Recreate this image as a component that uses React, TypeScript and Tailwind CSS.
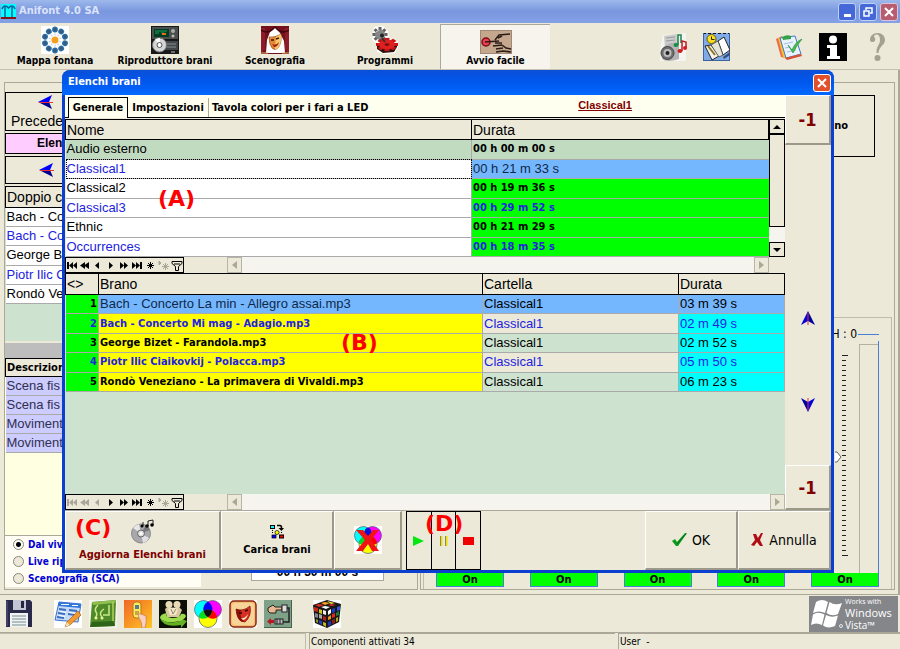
import { useState } from 'react';
import type { ReactNode } from 'react';
import clsx from 'clsx';

const TAHOMA = "font-['DejaVu_Sans_Condensed','DejaVu_Sans',sans-serif]";
const ARIAL = "font-['Liberation_Sans',Arial,sans-serif]";

const playlists = [
  { name: 'Audio esterno', duration: '00 h 00 m 00 s' },
  { name: 'Classical1', duration: '00 h 21 m 33 s' },
  { name: 'Classical2', duration: '00 h 19 m 36 s' },
  { name: 'Classical3', duration: '00 h 29 m 52 s' },
  { name: 'Ethnic', duration: '00 h 21 m 29 s' },
  { name: 'Occurrences', duration: '00 h 18 m 35 s' },
];

const tracks = [
  { title: 'Bach - Concerto La min - Allegro assai.mp3', folder: 'Classical1', duration: '03 m 39 s' },
  { title: 'Bach - Concerto Mi mag - Adagio.mp3', folder: 'Classical1', duration: '02 m 49 s' },
  { title: 'George Bizet - Farandola.mp3', folder: 'Classical1', duration: '02 m 52 s' },
  { title: 'Piotr Ilic Ciaikovkij - Polacca.mp3', folder: 'Classical1', duration: '05 m 50 s' },
  { title: 'Rondò Veneziano - La primavera di Vivaldi.mp3', folder: 'Classical1', duration: '06 m 23 s' },
];

const queue = ['Bach - Co', 'Bach - Co', 'George B', 'Piotr Ilic C', 'Rondò Ve'];
const scenes = ['Scena fis', 'Scena fis', 'Moviment', 'Moviment'];
const modes = ['Dal vivo', 'Live rip', 'Scenografia (SCA)'];

/* ---------- icone ---------- */

function LogoIcon() {
  return (
    <svg width="15" height="15" viewBox="0 0 15 15">
      <rect width="15" height="15" fill="#0ff" />
      <path d="M1 5Q2 2 4 2Q6 2 7.500 4Q9 2 11 2Q13 2 14 5M4 3v10M11 3v10" fill="none" stroke="#1060a0" strokeWidth="1.500" />
      <rect y="13" width="15" height="2" fill="#801818" />
    </svg>
  );
}

function FountainIcon() {
  const dots = [0, 36, 72, 108, 144, 180, 216, 252, 288, 324];
  return (
    <svg width="28" height="28" viewBox="0 0 28 28">
      <rect width="28" height="28" fill="#fff" />
      {dots.map((a) => (
        <g key={a} transform={`rotate(${a} 14 14)`}>
          <circle cx="14" cy="3.500" r="2.900" fill="#2a70a8" />
          <circle cx="14" cy="3.500" r="1.600" fill="#3b5878" />
          <path d="M14 7.500v2" stroke="#b8cfe6" />
        </g>
      ))}
      <circle cx="14" cy="14" r="3.500" fill="#f5a020" />
    </svg>
  );
}

function PlayerIcon() {
  return (
    <svg width="28" height="28" viewBox="0 0 28 28">
      <rect width="28" height="28" fill="#181818" />
      <rect x="1" y="1" width="26" height="12" fill="#4a4e4c" />
      <rect x="3" y="3" width="15" height="8" fill="#033b20" />
      <path d="M4 5h12M4 7h4M10 7h3" stroke="#16a35a" />
      <path d="M11 8h4" stroke="#e07020" strokeWidth="2" />
      <circle cx="22" cy="5" r="2" fill="#aaa" />
      <circle cx="22" cy="10" r="1.500" fill="#bbb" />
      <rect x="13" y="15" width="14" height="9" fill="#40464a" />
      <path d="M16 18h9M16 21h9" stroke="#8a9296" />
      <circle cx="8.500" cy="19" r="7" fill="#d5d5d5" stroke="#777" />
      <path d="M8.500 19L4 13.500A7 7 0 0 1 9 12Z" fill="#fff" />
      <circle cx="8.500" cy="19" r="2.500" fill="#fff" stroke="#555" />
      <path d="M20 26h4" stroke="#bbb" />
    </svg>
  );
}

function StageIcon() {
  return (
    <svg width="28" height="28" viewBox="0 0 28 28">
      <rect width="28" height="28" fill="#72101c" />
      <path d="M5 27L6 14L9 6L14 1L19 7L23 15L24 27Z" fill="#fff" />
      <path d="M1 2v24M3 2v22M25 2v22M27 2v24" stroke="#a82838" />
      <path d="M0 4Q7 9 14 1Q21 9 28 4" fill="none" stroke="#45040c" strokeWidth="1.500" />
      <path d="M8 11Q14 12 20 8Q21 17 17 22Q14 25 11 22Q8 18 8 11Z" fill="#e58a32" stroke="#8c3c10" strokeWidth=".6" />
      <path d="M15 11L20 8Q21 17 17 22Q15 24 14 23Z" fill="#f8c870" />
      <path d="M10 14l3 0M15 13l3-1" stroke="#3c1400" strokeWidth="1.500" />
      <path d="M11 18Q15 20 18 16Q17 21 13 21Z" fill="#a02010" />
      <path d="M0 27h7M21 27h7" stroke="#e2b464" />
    </svg>
  );
}

function GearsIcon() {
  const teeth = [0, 45, 90, 135, 180, 225, 270, 315];
  return (
    <svg width="28" height="28" viewBox="0 0 28 28">
      <path d="M3 1L12 0L17 5L18 12L27 15L27 22L24 27L14 28L6 26L6 18L1 14Z" fill="#fff" />
      {teeth.map((a) => (
        <rect key={a} x="7.500" y="1" width="3" height="4" fill="#606060" transform={`rotate(${a} 9 8.500)`} />
      ))}
      <circle cx="9" cy="8.500" r="5" fill="#858585" />
      <circle cx="11" cy="9.500" r="2" fill="#222" />
      <path d="M5 6l3-2" stroke="#ccc" />
      <path d="M6 19V23L12 27L23 26L26 21V17Z" fill="#2c1010" />
      <g transform="translate(16 18.500) scale(1 .6)">
        {teeth.map((a) => (
          <rect key={a} x="-2.500" y="-11" width="5" height="6" fill="#c81414" transform={`rotate(${a})`} />
        ))}
        <circle r="8" fill="#e02020" />
        <circle r="2.500" fill="#801010" />
      </g>
      <path d="M11 12l3 4" stroke="#333" strokeWidth="2" />
    </svg>
  );
}

function HandIcon() {
  return (
    <svg width="32" height="24" viewBox="0 0 32 24">
      <rect width="32" height="24" fill="#c4a78c" />
      <rect x=".5" y=".5" width="31" height="23" fill="none" stroke="#a08878" />
      <circle cx="6" cy="12" r="4" fill="#e84050" stroke="#7c1018" strokeWidth="1.500" />
      <path d="M5 12l14-1M15 10L19 5L30 4M18 8l4-2M15 13H22M13 16l9-1M16 19l7-1M22 15l4 3 5 1M16 22l7-1 8 1" fill="none" stroke="#2c1c18" strokeWidth="1.500" />
    </svg>
  );
}

function SpeakerIcon() {
  return (
    <svg width="28" height="28" viewBox="0 0 28 28">
      <path d="M4 2L27 0V28H1V15Z" fill="#f4f4f0" />
      <path d="M5 3L18 1L20 14L6 16Z" fill="#ccc" />
      <path d="M7 5l9-1M7 8l9-1" stroke="#999" />
      <path d="M3 16Q10 8 20 10V26Q8 30 3 26Z" fill="#b4b4b4" />
      <circle cx="8.500" cy="20" r="6.500" fill="#707070" stroke="#444" />
      <circle cx="8.500" cy="20" r="4" fill="#bdbdbd" />
      <circle cx="8.500" cy="20" r="2" fill="#222" />
      <path d="M19 12V2h3V10" fill="none" stroke="#16864a" strokeWidth="1.500" />
      <ellipse cx="17" cy="12" rx="2.500" ry="2" fill="#189048" />
      <path d="M23 18V8l4 1V15" stroke="#c01c20" strokeWidth="1.500" fill="none" />
      <ellipse cx="21" cy="18" rx="2.500" ry="2" fill="#d01c20" />
      <ellipse cx="26" cy="15" rx="2" ry="2" fill="#d01c20" />
    </svg>
  );
}

function AgendaIcon() {
  return (
    <svg width="27" height="28" viewBox="0 0 27 28">
      <rect width="27" height="28" fill="#7facE6" />
      <path d="M0 .5H27" stroke="#111" strokeDasharray="3 2" />
      <path d="M.5 0V28M26.500 0V28M0 27.500H27" stroke="#3c62a0" />
      <path d="M2 13L8 12L16 23L9 27Z" fill="#f4f4ec" stroke="#222" />
      <path d="M15 8L21 4L27 17L20 22Z" fill="#fff" stroke="#222" />
      <path d="M8 12L15 8L20 22L16 24Z" fill="#e4e4d8" stroke="#333" strokeWidth=".7" />
      <path d="M5 13l7 9" stroke="#8c7418" strokeWidth="2" />
      <circle cx="8.500" cy="6" r="4.500" fill="#ffdf20" stroke="#6c5808" />
      <path d="M8.500 3.500v3h3" fill="none" stroke="#222" />
      <path d="M20 24L27 19V22L21 26Z" fill="#35507c" />
    </svg>
  );
}

function ChecklistIcon() {
  return (
    <svg width="28" height="26" viewBox="0 0 28 26">
      <path d="M1 5L7 2L10 24L6 23Z" fill="#ef6a50" />
      <path d="M3 4L9 3L12 25L8 23Z" fill="#f5c52c" />
      <path d="M5 4L20 2L26 20L11 24Z" fill="#e9f3ff" stroke="#4378c4" />
      <path d="M10 24L26 20L27 22L12 26Z" fill="#d85030" />
      <path d="M7 3Q12 0 16 2L16 5L8 6Z" fill="#34a248" />
      <path d="M9 10l9-2M10 14l5-1M12 18l9-2" stroke="#a8bddc" />
      <path d="M13 11L17 16Q20 8 27 5Q22 11 18 19Z" fill="#46c04c" stroke="#218630" strokeWidth=".6" />
    </svg>
  );
}

function InfoIcon() {
  return (
    <svg width="28" height="28" viewBox="0 0 28 28">
      <rect width="28" height="28" />
      <circle cx="14" cy="6.500" r="4" fill="#fff" />
      <path d="M8 12H18V23H21V26H8V23H11V15H8Z" fill="#fff" />
    </svg>
  );
}

function HelpIcon() {
  return (
    <svg width="17" height="28" viewBox="0 0 17 28">
      <path d="M1 7C1 3 4 0 8.500 0C13 0 16 3 16 7C16 12 10 13 9.500 20H7.500C7 13 11 12 11 7C11 3 9.500 1.500 7.500 1.500C6 1.500 5 2.500 5 4C7 5 6.500 9 4 9C2 9 1 8.500 1 7Z" fill="#a5a192" />
      <circle cx="8.500" cy="25" r="3" fill="#a5a192" />
    </svg>
  );
}

// freccia di navigazione blu con asse rosso
function ArrowHead({ className }: { className?: string }) {
  return (
    <svg width="15" height="14" viewBox="0 0 15 14" className={className}>
      <path d="M0 7L14 0L11 7Z" fill="#00f" />
      <path d="M0 7L14 14L11 7Z" fill="#000090" />
      <path d="M1 7.500H15" stroke="#f03030" />
    </svg>
  );
}

function VerticalArrow({ className }: { className?: string }) {
  return (
    <svg width="14" height="14" viewBox="0 0 14 14" className={className}>
      <path d="M7 0L0 14L7 10Z" fill="#0000e0" />
      <path d="M7 0L14 14L7 10Z" fill="#0000a0" />
      <path d="M7 2V14" stroke="#f03030" />
    </svg>
  );
}

function CdIcon() {
  return (
    <svg width="24" height="25" viewBox="0 0 24 25">
      <circle cx="10" cy="14.500" r="9.500" fill="#a8a8ac" stroke="#888" />
      <path d="M10 14.500L2 9A9.500 9.500 0 0 1 8 5Z" fill="#e6e6e6" />
      <path d="M10 14.500L12 24A9.500 9.500 0 0 0 18 19Z" fill="#e0e0e4" />
      <path d="M10 14.500L19 11A9.500 9.500 0 0 0 15 6Z" fill="#77777c" />
      <circle cx="10" cy="14.500" r="3.500" fill="#ddd" stroke="#666" />
      <circle cx="10" cy="14.500" r="1.500" fill="#fff" />
      <path d="M12 7V3M17 7V2L22 1V6" fill="none" stroke="#222" />
      <circle cx="11" cy="7" r="1.500" />
      <circle cx="16" cy="7" r="1.800" />
      <circle cx="21" cy="6" r="1.800" />
    </svg>
  );
}

function LoadIcon() {
  return (
    <svg width="14" height="15" viewBox="0 0 14 15">
      <rect x=".5" y="1.500" width="4" height="3" fill="#0ff" stroke="#000" />
      <path d="M7 1.500h3Q11.500 1.500 11.500 4" fill="none" stroke="#000" strokeWidth="1.500" />
      <path d="M8.500 4H14L11.500 7Z" />
      <path d="M2.500 6v3M11.500 8v2" stroke="#000" strokeDasharray="1 1" />
      <circle cx="7" cy="8.500" r="2" fill="#ff0" stroke="#000" strokeWidth=".7" />
      <rect x="2" y="11" width="4" height="3" fill="#00f" stroke="#000" strokeWidth=".7" />
      <rect x="9.500" y="11" width="4" height="3" fill="#f00" stroke="#000" />
    </svg>
  );
}

function RgbIcon({ crossed }: { crossed?: boolean }) {
  return (
    <svg width="28" height="28" viewBox="0 0 28 28">
      <rect width="28" height="28" fill="#fff" />
      <circle cx="9.500" cy="9.500" r="9" fill="#0ff" stroke="#456" strokeWidth=".7" />
      <circle cx="18.500" cy="9.500" r="9" fill="#f0f" stroke="#456" strokeWidth=".7" />
      <circle cx="14" cy="18.500" r="9" fill="#ff0" stroke="#456" strokeWidth=".7" />
      <path d="M14 1.700A9 9 0 0 1 18.300 10.600A9 9 0 0 0 9.700 10.600A9 9 0 0 1 14 1.700Z" fill="#00f" />
      <path d="M5 17.400A9 9 0 0 1 9.700 10.600A9 9 0 0 0 14 17.300A9 9 0 0 1 5 17.400Z" fill="#00e020" />
      <path d="M23 17.400A9 9 0 0 0 18.300 10.600A9 9 0 0 1 14 17.300A9 9 0 0 0 23 17.400Z" fill="#f00" />
      <path d="M9.700 10.600A9 9 0 0 1 18.300 10.600A9 9 0 0 1 14 17.300A9 9 0 0 1 9.700 10.600Z" fill="#101010" />
      {crossed && <path d="M2 4H9L14 10L19 4H25L17 14L25 25H18L14 18L9 25H2L11 14Z" fill="#f01414" />}
      {crossed && <circle cx="14" cy="5" r="3" fill="#1010d0" />}
    </svg>
  );
}

function FloppyIcon() {
  return (
    <svg width="26" height="27" viewBox="0 0 26 27">
      <path d="M0 0H24L26 2V27H0Z" fill="#29294a" />
      <rect x="7" y="0" width="13" height="10" fill="#c4c6d4" />
      <rect x="15" y="1" width="3" height="7" fill="#252540" />
      <rect x="4" y="13" width="18" height="14" fill="#f0f2f4" />
      <path d="M6 16h14M6 19h14M6 22h14M6 25h14" stroke="#74908c" />
      <path d="M1 1v25" stroke="#5b5b85" />
    </svg>
  );
}

function FormIcon() {
  return (
    <svg width="28" height="28" viewBox="0 0 28 28">
      <rect width="28" height="28" fill="#fff" />
      <path d="M5 2L27 4L24 22L1 20Z" fill="#c4dcfa" stroke="#3b70c8" />
      <path d="M5 2L27 4L26 8L4 6Z" fill="#3478d8" />
      <path d="M7 4.500h8M18 5.500h6" stroke="#fff" />
      <path d="M5 9l7 1M15 10l8 1M4 13l7 1M14 14l8 1M3 17l7 1" stroke="#3a6cc0" strokeWidth="2" />
      <path d="M6 11.500l6 1M15 12.500l7 1M5 15.500l6 1" stroke="#fff" />
      <path d="M24 11L27 15L16 25L11 27L13 22Z" fill="#f29a30" stroke="#a55c10" strokeWidth=".7" />
      <path d="M13 22l3 3-5 2Z" fill="#f4dcb0" />
    </svg>
  );
}

function BoardIcon() {
  return (
    <svg width="28" height="28" viewBox="0 0 28 28">
      <rect width="28" height="28" fill="#f5f5ec" />
      <path d="M3 2L27 0L26 26L1 27Z" fill="#4f8a28" />
      <path d="M3 2L27 0L26 3L4 5Z" fill="#90bf50" />
      <path d="M1 27L3 22L24 21L26 26Z" fill="#2d6418" />
      <path d="M9 5Q5 9 7 12T6 18M13 17Q9 13 15 9M20 5V15H14" fill="none" stroke="#cde888" strokeWidth="1.500" />
      <circle cx="7" cy="18" r="1.500" fill="#f0f0a0" />
      <circle cx="13" cy="18" r="1.500" fill="#f0f0a0" />
      <path d="M24 2v19" stroke="#b4d058" strokeWidth="1.500" />
    </svg>
  );
}

function RemoteIcon() {
  return (
    <svg width="28" height="28" viewBox="0 0 28 28">
      <defs>
        <linearGradient id="remote-bg" x1="0" y1="0" x2="1" y2="1">
          <stop offset="0" stopColor="#f06428" />
          <stop offset="1" stopColor="#ffc820" />
        </linearGradient>
      </defs>
      <rect width="28" height="28" fill="url(#remote-bg)" />
      <rect x="9" y="2" width="8" height="16" rx="3" fill="#ffe860" stroke="#b47a18" />
      <rect x="11" y="5" width="4" height="4" fill="#508090" />
      <path d="M11 12h4M11 14h4" stroke="#8a6a20" />
      <path d="M15 18Q13 13 17 14L22 16Q23 22 21 28H18Q18 22 15 18Z" fill="#f8d0c0" stroke="#ca7858" strokeWidth=".7" />
    </svg>
  );
}

function FriendsIcon() {
  return (
    <svg width="28" height="28" viewBox="0 0 28 28">
      <rect width="28" height="28" fill="#0d1006" />
      <path d="M8 17L6 9L10 6L14 9L19 6L23 10L20 17Z" fill="#d8c8a0" />
      <circle cx="10" cy="4.500" r="3.500" fill="#e8dab4" />
      <circle cx="18" cy="4.500" r="3.500" fill="#e8dab4" />
      <path d="M9 9Q14 6 19 9L17 15H11Z" fill="#f2e8cc" />
      <path d="M12 9L14 14L17 9" fill="none" stroke="#9c885c" />
      <path d="M1 18Q9 25 21 21L20 18L28 21L22 28L22 25Q4 28 1 18Z" fill="#63b020" />
      <path d="M1 18Q1 14 8 13Q5 17 13 18Q21 18 22 14Q26 13 27 16Q26 21 15 22Q5 23 1 18Z" fill="#9cdc4c" />
    </svg>
  );
}

function TheatreIcon() {
  return (
    <svg width="28" height="28" viewBox="0 0 28 28">
      <rect width="28" height="28" fill="#fff" />
      <rect x="1" y="1" width="26" height="26" rx="4" fill="#f3bd75" stroke="#8a2410" strokeWidth="1.500" />
      <rect x="3" y="3" width="22" height="22" rx="3" fill="#f8d498" />
      <path d="M7 9Q14 12 21 6Q23 16 16 22Q8 22 7 9Z" fill="#d83020" stroke="#701008" strokeWidth=".7" />
      <path d="M7 9Q10 10 12 10Q10 16 15 22Q8 22 7 9Z" fill="#8c1008" />
      <path d="M10 13l3 0M16 11l3-1" stroke="#300" strokeWidth="1.500" />
      <path d="M12 18Q16 19 19 14Q18 19 14 20Z" fill="#fff0d0" />
    </svg>
  );
}

function PlugIcon() {
  return (
    <svg width="28" height="28" viewBox="0 0 28 28">
      <rect width="28" height="28" fill="#7fa188" />
      <path d="M0 27.500H28M27.500 0V28" stroke="#47624e" />
      <path d="M4 8L9 5L11 7H18V10H12V13H6L4 11Z" fill="#e8b890" stroke="#222" />
      <rect x="18" y="5" width="5" height="7" fill="#ddd" stroke="#222" />
      <path d="M23 8h2v14h-6" fill="none" stroke="#222" strokeWidth="1.500" />
      <rect x="11" y="19" width="8" height="5" fill="#bbb" stroke="#222" />
      <path d="M13 19v5M16 19v5" stroke="#222" />
      <path d="M10 20H7V18L3 21.500L7 25V23H10Z" fill="#b81820" />
    </svg>
  );
}

function CubeIcon() {
  return (
    <svg width="28" height="28" viewBox="0 0 28 28">
      <rect width="28" height="28" fill="#fff" />
      <path d="M0 5L14 0L28 4L26 22L14 28L2 23Z" fill="#181818" />
      <path d="M2 5L6 4L11 5L6 7Z" fill="#e02c20" />
      <path d="M8 3L12 2L17 3L12 5Z" fill="#f8a020" />
      <path d="M14 1L18 2L22 3L18 4Z" fill="#f0e040" />
      <path d="M8 7L12 6L17 7L13 9Z" fill="#fff" />
      <path d="M15 5L18 4L23 5L19 6Z" fill="#e03020" />
      <path d="M1 7L5 8V12L1 11Z" fill="#c82818" />
      <path d="M6 9L9 10V14L6 13Z" fill="#d0c820" />
      <path d="M10 10L13 11V15L10 14Z" fill="#f0f0e8" />
      <path d="M2 13L5 14V18L2 17Z" fill="#888" />
      <path d="M6 14L9 15V19L6 18Z" fill="#aaa" />
      <path d="M10 16L13 17V21L10 20Z" fill="#b02018" />
      <path d="M3 19L5 20V23L3 22Z" fill="#98941c" />
      <path d="M6 20L9 21V25L6 23Z" fill="#2040c0" />
      <path d="M10 22L13 23V27L10 25Z" fill="#c0b820" />
      <path d="M15 11L18 9V13L15 15Z" fill="#fff" />
      <path d="M19 9L22 8V12L19 13Z" fill="#2038c8" />
      <path d="M24 7L27 6V10L24 11Z" fill="#3058d8" />
      <path d="M15 17L18 15V19L15 20Z" fill="#f09020" />
      <path d="M19 14L22 13V17L19 18Z" fill="#d82c20" />
      <path d="M23 13L26 11V15L23 16Z" fill="#18803c" />
      <path d="M15 22L18 21V25L15 26Z" fill="#2038c0" />
      <path d="M19 20L22 19V23L19 24Z" fill="#882018" />
      <path d="M23 18L25 17V21L23 22Z" fill="#b0a81c" />
    </svg>
  );
}

function WindowsFlag() {
  return (
    <svg width="33" height="30" viewBox="0 0 33 30">
      <path d="M5 3Q11 -1 17 3L14 14Q8 11 2 14Z" fill="#fff" />
      <path d="M18.500 3Q24 7 31 4L27 15Q21 18 15.500 14Z" fill="#fff" />
      <path d="M2 15.500Q7 12 13.500 15.500L11 26Q5 23 0 26Z" fill="#fff" />
      <path d="M15 16Q21 19 27 16.500L24 27Q17 30 12 26.500Z" fill="#fff" />
      <circle cx="30" cy="27" r="1.500" fill="none" stroke="#fff" strokeWidth=".8" />
    </svg>
  );
}

function NavGlyphs({ atStart }: { atStart?: boolean }) {
  const dim = atStart ? '#aaa79a' : '#000';
  return (
    <svg width="117" height="13" viewBox="0 0 117 13">
      <path d="M1 3h2v7h-2ZM7 3v7L3 6.500ZM11 3v7L7 6.500Z" fill={dim} />
      <path d="M19 3v7L14 6.500ZM23 3v7L18 6.500Z" fill={dim} />
      <path d="M33 3v7L29 6.500Z" fill={dim} />
      <path d="M43 3v7L47 6.500ZM54 3v7L58 6.500ZM58 3v7L62 6.500ZM66 3v7L70 6.500ZM70 3v7L74 6.500ZM74 3h2v7h-2Z" />
      <path d="M84.500 3v7M81 6.500h7M82 4l5 5M87 4l-5 5" stroke="#000" />
      <path d="M93 2v4l2-2ZM99.500 4v7M96 7.500h7M97 5l5 5M102 5l-5 5" stroke="#aaa79a" fill="#aaa79a" />
      <path d="M106 2.500h10v2l-3.500 3v4h-3v-4l-3.500-3ZM108 5h6" fill="none" stroke="#000" />
    </svg>
  );
}

/* ---------- controlli ---------- */

function ToolButton({ icon, label, active }: { icon: ReactNode; label: string; active?: boolean }) {
  return (
    <button
      className={clsx(
        'flex w-[110px] flex-col items-center justify-end pb-[2px] text-[10px] leading-[13px] font-bold',
        active && 'border-t border-l border-[#aca899] bg-[#f6f4ec]'
      )}
    >
      {icon}
      <span>{label}</span>
    </button>
  );
}

function Navigator({ atStart, full }: { atStart?: boolean; full?: boolean }) {
  return (
    <div className="flex h-4 shrink-0 bg-[#ece9d8]">
      <div className="flex w-[119px] items-center border border-black">
        <NavGlyphs atStart={atStart} />
      </div>
      <div className="w-[43px]" />
      <button aria-label="Scorri a sinistra" className="flex w-[15px] items-center justify-center border border-[#b8b5a6]">
        <svg width="5" height="8"><path d="M5 0v8L0 4Z" fill="#aca899" /></svg>
      </button>
      <div className="flex-1 bg-[#f6f4ee]" />
      <button aria-label="Scorri a destra" className="flex w-[15px] items-center justify-center border border-[#b8b5a6]">
        <svg width="5" height="8"><path d="M0 0v8L5 4Z" fill="#aca899" /></svg>
      </button>
      {!full && <div className="w-4" />}
    </div>
  );
}

function DialogButton({ className, children }: { className?: string; children: ReactNode }) {
  return (
    <button
      className={clsx(
        'flex items-center justify-center border-t border-r-2 border-b-2 border-l border-t-white border-r-[#9c998a] border-b-[#9c998a] border-l-white',
        className
      )}
    >
      {children}
    </button>
  );
}

const headCell = 'border border-black bg-[#ece9d8] px-px text-left text-[14px] font-normal';

function PlaylistGrid() {
  const [selected] = useState(1);
  return (
    <div className="flex h-[138px] shrink-0">
      <table className={clsx('h-full flex-1 table-fixed border-collapse text-[13px] leading-[16px]', ARIAL)}>
        <thead>
          <tr className="h-[20px]">
            <th className={clsx(headCell, 'w-[406px]')}>Nome</th>
            <th className={headCell}>Durata</th>
          </tr>
        </thead>
        <tbody>
          {playlists.map((p, i) => (
            <tr key={p.name} className={i % 2 ? 'text-[#2222e0]' : 'text-black'}>
              <td
                className={clsx(
                  'border-r border-b border-[#aaa] px-px py-0',
                  i === 0 ? 'bg-[#c1dbc1]' : 'bg-white',
                  i === selected && 'outline-1 -outline-offset-1 outline-dotted outline-black'
                )}
              >
                {p.name}
              </td>
              <td
                className={clsx(
                  'border-b border-[#aaa] px-px py-0',
                  i === selected ? 'bg-[#75b7ff] text-[#102848]' : clsx('text-[11px] font-bold', TAHOMA),
                  i === 0 && 'bg-[#c1dbc1]',
                  i > 0 && i !== selected && 'bg-[#0f0]'
                )}
              >
                {p.duration}
              </td>
            </tr>
          ))}
        </tbody>
      </table>
      <div className="flex w-4 flex-col bg-[#f6f4ee]">
        <button aria-label="Su" className="flex h-[15px] items-center justify-center border border-black bg-[#ece9d8]">
          <svg width="8" height="4"><path d="M0 4h8L4 0Z" /></svg>
        </button>
        <div className="h-[93px] border border-black bg-[#ece9d8]" />
        <div className="flex-1" />
        <button aria-label="Giù" className="flex h-[15px] items-center justify-center border border-black bg-[#ece9d8]">
          <svg width="8" height="4"><path d="M0 0h8L4 4Z" /></svg>
        </button>
      </div>
    </div>
  );
}

function TrackGrid() {
  const cell = 'border-r border-b border-[#aaa] px-px py-0';
  return (
    <div className="flex-1 bg-[#cde3cf]">
      <table className={clsx('h-[119px] w-full table-fixed border-collapse text-[13px] leading-[16px]', ARIAL)}>
        <thead>
          <tr className="h-[21px]">
            <th className={clsx(headCell, 'w-[33px]')}>&lt;&gt;</th>
            <th className={clsx(headCell, 'w-[384px]')}>Brano</th>
            <th className={clsx(headCell, 'w-[196px]')}>Cartella</th>
            <th className={headCell}>Durata</th>
          </tr>
        </thead>
        <tbody>
          {tracks.map((t, i) => {
            const first = i === 0;
            return (
              <tr key={t.title} className={clsx(i % 2 ? 'text-[#2222e0]' : 'text-black', first && 'bg-[#75b7ff]')}>
                <td className={clsx(cell, 'bg-[#0f0] text-right text-[11px] font-bold', TAHOMA)}>{i + 1}</td>
                <td className={clsx(cell, first ? 'text-[#102848]' : clsx('bg-[#ff0] text-[11px] font-bold', TAHOMA))}>
                  {t.title}
                </td>
                <td className={clsx(cell, !first && (i % 2 ? 'bg-[#ece9d8]' : 'bg-[#cde3cf]'))}>{t.folder}</td>
                <td className={clsx(cell, !first && 'bg-[#0ff]')}>{t.duration}</td>
              </tr>
            );
          })}
        </tbody>
      </table>
    </div>
  );
}

function Marker({ letter, className }: { letter: string; className: string }) {
  return (
    <span className={clsx("absolute font-['DejaVu_Sans',sans-serif] text-[22px] leading-6 font-bold text-[#f00]", className)}>
      ({letter})
    </span>
  );
}

function PlaylistDialog() {
  return (
    <section className="absolute top-0 right-[64px] bottom-[21px] left-[62px] flex flex-col rounded-t-lg border-x-[3px] border-b-[3px] border-[#0a3fd0] bg-[#ece9d8]">
      <header className="-mx-[3px] flex h-[25px] shrink-0 items-center justify-between rounded-t-lg bg-linear-to-b from-[#0a4fd8] via-[#0058ee] to-[#0468ff] pr-[3px] pl-[6px]">
        <h2 className="text-[11px] font-bold text-white">Elenchi brani</h2>
        <button aria-label="Chiudi" className="flex size-[18px] items-center justify-center rounded-[3px] border border-white bg-[#e2502c]">
          <svg width="10" height="10"><path d="M1 1l8 8M9 1L1 9" stroke="#fff" strokeWidth="2" /></svg>
        </button>
      </header>

      <div className="flex min-h-0 flex-1">
        <div className="flex min-w-0 flex-1 flex-col">
          <div className="mb-px flex h-[23px] shrink-0 items-end border-b border-black bg-[#fffff0] text-[11px] leading-[14px] font-bold">
            <button className="-mb-px ml-[3px] h-[21px] w-[60px] border border-b-0 border-black bg-[#fffff0]">Generale</button>
            <button className="h-[19px] w-[81px] border-r border-[#aca899] whitespace-nowrap">Impostazioni</button>
            <button className="h-[19px] pl-[3px] whitespace-nowrap">Tavola colori per i fari a LED</button>
            <a href="#classical1" className={clsx('mr-[153px] mb-[5px] ml-auto text-[#800000] underline', ARIAL)}>Classical1</a>
          </div>
          <PlaylistGrid />
          <Navigator />
          <TrackGrid />
          <Navigator atStart full />
        </div>
        <div className="flex w-[46px] flex-col items-center">
          <DialogButton className="h-[50px] w-full text-[18px] font-bold text-[#800000]">-1</DialogButton>
          <div className="flex flex-1 flex-col justify-end gap-[73px] pb-[53px]">
            <button aria-label="Sposta su"><VerticalArrow /></button>
            <button aria-label="Sposta giù"><VerticalArrow className="rotate-180" /></button>
          </div>
          <DialogButton className="h-[45px] w-full text-[18px] font-bold text-[#800000]">-1</DialogButton>
        </div>
      </div>

      <footer className="flex h-[60px] shrink-0 border-t border-[#aca899] font-bold">
        <DialogButton className="w-[156px] flex-col gap-[3px] text-[11px] leading-[15px] text-[#800000]">
          <CdIcon />
          Aggiorna Elenchi brani
        </DialogButton>
        <DialogButton className="w-[113px] flex-col gap-[3px] text-[11px] leading-[15px]">
          <LoadIcon />
          Carica brani
        </DialogButton>
        <DialogButton className="w-[68px]"><RgbIcon crossed /></DialogButton>
        <div className="ml-1 flex w-[75px] divide-x divide-black border border-black">
          <button aria-label="Play" className="flex flex-1 items-center justify-center">
            <svg width="11" height="10"><path d="M0 0v10L11 5Z" fill="#00e810" /></svg>
          </button>
          <button aria-label="Pausa" className="flex flex-1 items-center justify-center">
            <svg width="8" height="10"><path d="M1.500 0v10M6.500 0v10" stroke="#f0e000" strokeWidth="2" /><path d="M.5 0v10M5.500 0v10" stroke="#8a8a60" /></svg>
          </button>
          <button aria-label="Stop" className="flex flex-1 items-center justify-center">
            <svg width="11" height="8"><rect width="11" height="8" fill="#f00000" /></svg>
          </button>
        </div>
        <div className="flex-1" />
        <DialogButton className="w-[93px] gap-1 text-[14px] font-normal">
          <svg width="16" height="14" viewBox="0 0 16 14"><path d="M0 8L3 6L5 9L13 0H15L6 13H4Z" fill="#0c9c1c" /><path d="M5 11L14 1" stroke="#0a4c30" strokeWidth=".7" /></svg>
          OK
        </DialogButton>
        <DialogButton className="w-[93px] gap-[5px] text-[14px] font-normal">
          <svg width="13" height="14" viewBox="0 0 13 14"><path d="M2 1L5 1L7 5L10 0H12L9 7L12 13L9 13L6 9L3 13L0 12L4 7Z" fill="#b00c14" /></svg>
          Annulla
        </DialogButton>
      </footer>

      <Marker letter="A" className="top-[117px] left-[93px]" />
      <Marker letter="B" className="top-[261px] left-[276px]" />
      <Marker letter="C" className="bottom-[30px] left-[10px]" />
      <Marker letter="D" className="bottom-[34px] left-[360px]" />
    </section>
  );
}

function LeftPanel() {
  const row = 'border-b border-[#aaa] px-px py-0 whitespace-nowrap';
  return (
    <div className="flex w-[414px] flex-col border border-[#aca899] pt-[9px]">
      <div className={clsx('flex min-h-0 flex-1 flex-col gap-[2px] text-[13px] leading-[16px]', ARIAL)}>
        <button className="flex h-[39px] shrink-0 flex-col items-start justify-center gap-[4px] border border-black pl-[5px] text-[14px]">
          <ArrowHead className="ml-[27px]" />
          Precedente
        </button>
        <div className="h-[21px] shrink-0 border border-black bg-[#ffccff] pl-[31px] text-[12px] leading-[19px] font-bold">Elenco</div>
        <button aria-label="Indietro" className="flex h-[28px] shrink-0 items-center border border-black pl-[33px]"><ArrowHead /></button>
        <div className="h-[155px] shrink-0 bg-[#cde3cf]">
          <table className="h-[118px] w-full border-collapse">
            <thead>
              <tr className="h-[21px]"><th className="border border-black bg-[#ece9d8] px-px py-0 text-left text-[14px] font-normal">Doppio c</th></tr>
            </thead>
            <tbody>
              {queue.map((q, i) => (
                <tr key={i}><td className={clsx(row, 'bg-white', i % 2 && 'text-[#2222e0]')}>{q}</td></tr>
              ))}
            </tbody>
          </table>
        </div>
        <div className="flex min-h-0 flex-1 flex-col border-t-[15px] border-[#bdbdbd] bg-[#ffffe1]">
          <table className="h-[95px] w-full border-collapse">
            <thead>
              <tr className="h-[18px]"><th className={clsx('border border-black bg-[#ece9d8] px-px py-0 text-left text-[11px] leading-[14px] font-bold', TAHOMA)}>Descrizione</th></tr>
            </thead>
            <tbody>
              {scenes.map((s, i) => (
                <tr key={i}><td className={clsx(row, 'bg-[#ccccff] text-[#303050]')}>{s}</td></tr>
              ))}
            </tbody>
          </table>
        </div>
      </div>
      <div className="flex shrink-0 items-end border-t border-[#aca899] pb-[2px]">
        <div className="flex h-[51px] w-[196px] flex-col justify-around bg-[#fffdf4] pl-2 text-[10px] leading-[13px] font-bold text-[#0000d8]">
          {modes.map((m, i) => (
            <label key={m} className="flex items-center gap-1">
              <input
                type="radio"
                name="mode"
                defaultChecked={i === 0}
                className="size-[11px] appearance-none rounded-full border border-[#8a8878] bg-[#ece9d8] checked:bg-[radial-gradient(circle,#000_0_2px,#fff_3px)]"
              />
              {m}
            </label>
          ))}
        </div>
        <div className={clsx('mb-[6px] ml-[50px] h-[18px] w-[133px] border border-[#aca899] bg-white text-center text-[12px] leading-[16px] font-bold', ARIAL)}>
          00 h 30 m 00 s
        </div>
      </div>
    </div>
  );
}

function RightPanel() {
  const ticks = Array.from({ length: 41 }, (_, i) => i * 5);
  return (
    <div className="flex flex-1 flex-col justify-between border border-[#aca899] px-[2px] pt-[12px]">
      <button className="mr-[17px] h-[62px] border border-black pr-[26px] text-right text-[11px] font-bold">no</button>
      <div className="flex h-[272px] flex-col border border-b-0 border-[#bfbcae] px-3 pt-[9px]">
        <div className="flex h-[14px] items-center justify-end text-[12px]">
          <span>H : 0</span>
          <span className="ml-px h-px w-[21px] bg-[#4a7fd8]" />
        </div>
        <div className="flex flex-1 items-start justify-end border-r border-[#4a7fd8] pt-[3px]">
          <svg width="16" height="225" viewBox="0 0 16 225">
            {ticks.map((y) => (
              <path key={y} d={y % 200 ? `M7 ${y + 11.5}h4` : `M7 ${y + 11.5}h6`} stroke="#222" />
            ))}
            <path d="M0 108h2L6 113L2 118H0" fill="#fff" stroke="#666" />
          </svg>
          <div className="ml-[8px] h-full w-[19px] border-t border-l border-[#b4b1a2]" />
        </div>
        <div className="flex h-[14px] justify-between">
          {[0, 1, 2, 3, 4].map((n) => (
            <button key={n} className="w-[68px] border border-[#4a7fd8] border-t-0 bg-[#0f0] text-[11px] leading-[13px] font-bold">On</button>
          ))}
        </div>
        <div className="h-[2px]" />
      </div>
    </div>
  );
}

export default function App() {
  return (
    <div className={clsx('flex h-screen min-h-[600px] flex-col overflow-hidden bg-[#ece9d8] text-black', TAHOMA)}>
      <header className="flex h-[23px] shrink-0 items-center gap-[3px] bg-linear-to-b from-[#9db9eb] via-[#7a96df] to-[#85a2e6] pr-[2px] pl-px">
        <LogoIcon />
        <h1 className="flex-1 text-[11px] font-bold text-[#dbe4fa]">Anifont 4.0 SA</h1>
        <button aria-label="Riduci" className="flex size-[18px] items-end justify-center rounded-[3px] border border-[#c0d0f4] bg-[#4468d8] pb-[3px]">
          <span className="h-[3px] w-[7px] bg-white" />
        </button>
        <button aria-label="Ripristina" className="flex size-[18px] items-center justify-center rounded-[3px] border border-[#c0d0f4] bg-[#4468d8]">
          <svg width="10" height="10"><path d="M3 3V1h6v5H7M1 4h5v5H1Z" fill="none" stroke="#fff" strokeWidth="1.500" /></svg>
        </button>
        <button aria-label="Chiudi finestra" className="flex size-[18px] items-center justify-center rounded-[3px] border border-[#d8c4dc] bg-[#b85c70]">
          <svg width="10" height="10"><path d="M1 1l8 8M9 1L1 9" stroke="#fff" strokeWidth="2" /></svg>
        </button>
      </header>

      <nav className="flex h-[47px] shrink-0 border-b border-[#c5c2b2] pt-px">
        <ToolButton icon={<FountainIcon />} label="Mappa fontana" />
        <ToolButton icon={<PlayerIcon />} label="Riproduttore brani" />
        <ToolButton icon={<StageIcon />} label="Scenografia" />
        <ToolButton icon={<GearsIcon />} label="Programmi" />
        <ToolButton icon={<HandIcon />} label="Avvio facile" active />
        <div className="ml-auto flex items-center pr-[14px]">
          <button aria-label="Audio" className="mr-4"><SpeakerIcon /></button>
          <button aria-label="Agenda" className="mr-[45px]"><AgendaIcon /></button>
          <button aria-label="Verifica" className="mr-4"><ChecklistIcon /></button>
          <button aria-label="Informazioni" className="mr-[22px]"><InfoIcon /></button>
          <button aria-label="Aiuto"><HelpIcon /></button>
        </div>
      </nav>

      <main className="relative flex min-h-0 flex-1 gap-[2px] border-r-2 border-[#aca899] pt-[12px] pr-[3px] pb-1 pl-1">
        <LeftPanel />
        <RightPanel />
        <PlaylistDialog />
      </main>

      <div className="flex h-[39px] shrink-0 items-center gap-[7px] border-y border-[#aca899] pr-[2px] pl-[6px]">
        <button aria-label="Salva" className="mr-[15px]"><FloppyIcon /></button>
        <button aria-label="Schede"><FormIcon /></button>
        <button aria-label="Circuito"><BoardIcon /></button>
        <button aria-label="Telecomando"><RemoteIcon /></button>
        <button aria-label="Gruppi"><FriendsIcon /></button>
        <button aria-label="Colori"><RgbIcon /></button>
        <button aria-label="Teatro"><TheatreIcon /></button>
        <button aria-label="Collegamenti"><PlugIcon /></button>
        <button aria-label="Cubo" className="ml-[14px]"><CubeIcon /></button>
        <div className="ml-auto flex h-9 w-[89px] items-center gap-px bg-[#85868a] pl-[2px] font-['Open_Sans',sans-serif] text-white">
          <WindowsFlag />
          <div>
            <p className="text-[7px] leading-[10px]">Works with</p>
            <p className="text-[11px] leading-[12px] font-medium">Windows</p>
            <p className="text-[10px] leading-[12px]">Vista™</p>
          </div>
        </div>
      </div>

      <footer className="flex h-[16px] shrink-0 gap-[3px] text-[10px] leading-[15px]">
        <div className="w-[306px] border-t border-r border-[#bfbcae]" />
        <div className="w-[306px] border-t border-l border-[#aca899] pl-px">Componenti attivati 34</div>
        <div className="flex-1 border-t border-l border-[#aca899] pl-px whitespace-pre">User  -</div>
      </footer>
    </div>
  );
}
